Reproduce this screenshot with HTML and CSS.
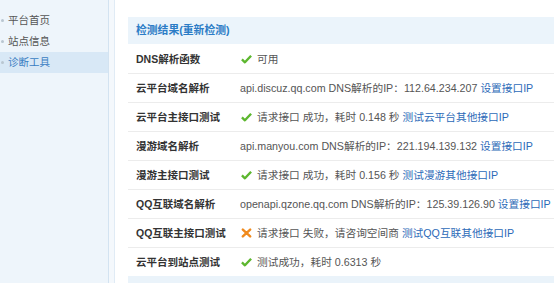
FILE: index.html
```html
<!DOCTYPE html>
<html lang="zh-CN">
<head>
<meta charset="utf-8">
<title>诊断工具</title>
<link rel="stylesheet" href="styles.css">
</head>
<body>
<div class="layout">
  <nav class="sidebar">
    <a class="nav-item">平台首页</a>
    <a class="nav-item">站点信息</a>
    <a class="nav-item active">诊断工具</a>
  </nav>
  <div class="gap"></div>
  <main class="main">
    <div class="panel-head">检测结果(重新检测)</div>
    <table class="results">
      <tr>
        <th>DNS解析函数</th>
        <td><svg class="ico" viewBox="0 0 12 10"><path d="M1 5.5 L4.3 8.6 L11 1.4" fill="none" stroke="#5db72f" stroke-width="2.6" stroke-linejoin="round"/></svg>可用</td>
      </tr>
      <tr>
        <th>云平台域名解析</th>
        <td>api.discuz.qq.com DNS解析的IP：112.64.234.207 <a>设置接口IP</a></td>
      </tr>
      <tr>
        <th>云平台主接口测试</th>
        <td><svg class="ico" viewBox="0 0 12 10"><path d="M1 5.5 L4.3 8.6 L11 1.4" fill="none" stroke="#5db72f" stroke-width="2.6" stroke-linejoin="round"/></svg>请求接口 成功，耗时 0.148 秒 <a>测试云平台其他接口IP</a></td>
      </tr>
      <tr>
        <th>漫游域名解析</th>
        <td>api.manyou.com DNS解析的IP：221.194.139.132 <a>设置接口IP</a></td>
      </tr>
      <tr>
        <th>漫游主接口测试</th>
        <td><svg class="ico" viewBox="0 0 12 10"><path d="M1 5.5 L4.3 8.6 L11 1.4" fill="none" stroke="#5db72f" stroke-width="2.6" stroke-linejoin="round"/></svg>请求接口 成功，耗时 0.156 秒 <a>测试漫游其他接口IP</a></td>
      </tr>
      <tr>
        <th>QQ互联域名解析</th>
        <td>openapi.qzone.qq.com DNS解析的IP：125.39.126.90 <a>设置接口IP</a></td>
      </tr>
      <tr>
        <th>QQ互联主接口测试</th>
        <td><svg class="ico" viewBox="0 0 12 10"><path d="M2 1.2 L10 8.8 M10 1.2 L2 8.8" fill="none" stroke="#f08a1d" stroke-width="2.6" stroke-linecap="round"/></svg>请求接口 失败，请咨询空间商 <a>测试QQ互联其他接口IP</a></td>
      </tr>
      <tr>
        <th>云平台到站点测试</th>
        <td><svg class="ico" viewBox="0 0 12 10"><path d="M1 5.5 L4.3 8.6 L11 1.4" fill="none" stroke="#5db72f" stroke-width="2.6" stroke-linejoin="round"/></svg>测试成功，耗时 0.6313 秒</td>
      </tr>
    </table>
    <div class="panel-foot"></div>
  </main>
</div>
</body>
</html>
```
FILE: styles.css
```css
html, body {
  margin: 0;
  padding: 0;
  background: #ffffff;
}
body {
  font-family: "Liberation Sans", "Noto Sans CJK SC", sans-serif;
  font-size: 10.5px;
  color: #555;
  overflow: hidden;
}
.layout {
  display: flex;
  height: 283px;
}
.sidebar {
  width: 108px;
  flex: none;
  background: #eef5fb;
  border-right: 1px solid #d3e3f1;
  padding-top: 10px;
  display: flex;
  flex-direction: column;
}
.nav-item {
  display: block;
  height: 21px;
  line-height: 21px;
  padding-left: 8px;
  color: #555;
  position: relative;
}
.nav-item::before {
  content: "";
  position: absolute;
  left: 1px;
  top: 9px;
  width: 3px;
  height: 3px;
  border-radius: 50%;
  background: #b9c6d1;
}
.nav-item.active {
  background: #d8e8f6;
  color: #3a7dc2;
}
.gap {
  width: 5px;
  flex: none;
  background: #f4f8fc;
}
.main {
  flex: 1;
  min-width: 0;
  border-left: 1px solid #e0ebf5;
  padding: 17px 0 0 13px;
  display: flex;
  flex-direction: column;
}
.panel-head {
  height: 27px;
  line-height: 27px;
  padding-left: 8px;
  background: #ebf4fb;
  color: #2b7cc6;
  font-weight: bold;
  font-size: 10.8px;
}
.results {
  width: 100%;
  border-collapse: collapse;
}
.results tr {
  height: 29px;
}
.results th,
.results td {
  border-bottom: 1px solid #ececec;
  padding: 0 0 0 8px;
  text-align: left;
  white-space: nowrap;
  vertical-align: middle;
}
.results tr:last-child th,
.results tr:last-child td {
  border-bottom: none;
}
.results th {
  width: 96px;
  font-weight: bold;
  color: #333;
}
.results td {
  color: #555;
  font-size: 10.7px;
}
.results a {
  color: #2c6ab8;
}
.ico {
  width: 11px;
  height: 10px;
  vertical-align: -1px;
  margin: 0 5px 0 1px;
}
.panel-foot {
  height: 8px;
  background: #eaf3fa;
}
```
